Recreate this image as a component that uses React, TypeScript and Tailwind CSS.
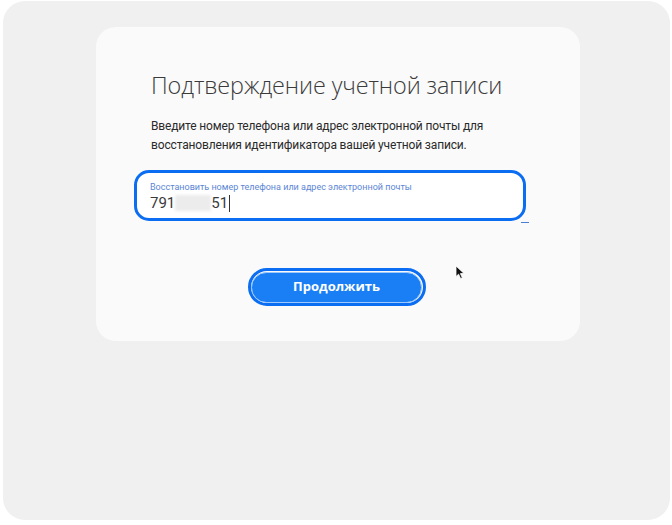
import React from 'react';

function Cursor() {
  return (
    <svg width="11" height="15" viewBox="0 0 11 15" className="absolute left-[455px] top-[265px]">
      <path d="M1 1 L1 11.5 L3.6 9.2 L5.6 13.6 L7.3 12.8 L5.4 8.6 L9 8.4 Z" fill="#111" stroke="#fff" strokeWidth="0.8" />
    </svg>
  );
}

export default function App() {
  return (
    <div className="relative w-[672px] h-[525px] bg-white" style={{ fontFamily: '"Open Sans", "Noto Sans", sans-serif' }}>
      <div className="absolute left-[3px] top-[1px] w-[667px] h-[519px] rounded-[22px] bg-[#f0f0f0]">
        <div className="ml-[93px] mt-[26px] w-[484px] h-[314px] rounded-[20px] bg-[#fafafa] pt-[42px] px-[55px]">
          <h1 className="text-[23.4px] font-light tracking-[-0.1px] leading-[32px] text-[#3b3b3b] whitespace-nowrap">
            Подтверждение учетной записи
          </h1>
          <p className="mt-[16px] text-[12px] leading-[19px] text-[#2a2a2a] font-[Roboto] tracking-[-0.15px] whitespace-nowrap">
            Введите номер телефона или адрес электронной почты для<br />
            восстановления идентификатора вашей учетной записи.
          </p>
          <div className="relative mt-[15px] -ml-[17px] w-[392px] h-[51px] rounded-[15px] border-[3.5px] border-[#0b6df2] bg-white pl-[13px] pt-[8px]">
            <div className="text-[9px] leading-[12px] text-[#5b86d6] whitespace-nowrap font-[Roboto]">
              Восстановить номер телефона или адрес электронной почты
            </div>
            <div className="flex items-center h-[20px] text-[15px] text-[#3a3a3a] font-[Roboto]">
              <span>791</span>
              <span className="inline-block w-[36px] h-[16px] bg-[#ececec] blur-[1.5px]" />
              <span>51</span>
              <span className="w-[1px] h-[17px] bg-[#333] ml-[1px]" />
            </div>
            <div className="absolute -right-[6px] -bottom-[5px] w-[8px] h-[1.5px] bg-[#4a7dd6]" />
          </div>
          <div className="mt-[47px] flex justify-center -ml-[3px]">
            <div className="rounded-full border-[3.5px] border-[#0b6df2] p-[0.5px]">
              <button className="w-[171px] h-[31px] rounded-full bg-[#1a7ff5] border-[1.5px] border-[#9cc8fb] text-white text-[13px] font-bold">
                Продолжить
              </button>
            </div>
          </div>
        </div>
      </div>
      <Cursor />
    </div>
  );
}
